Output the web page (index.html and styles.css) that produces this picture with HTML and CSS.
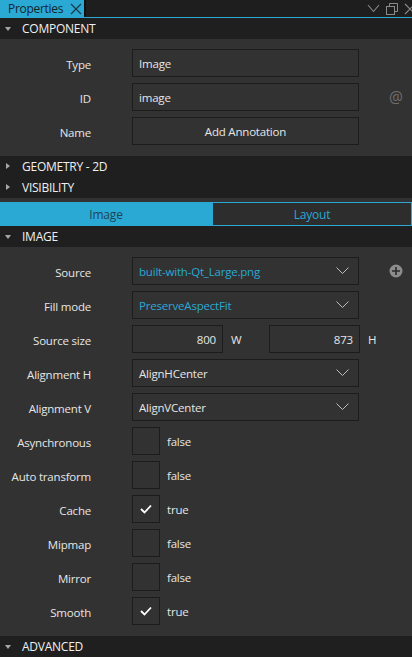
FILE: index.html
```html
<!DOCTYPE html>
<html>
<head>
<meta charset="utf-8">
<link rel="stylesheet" href="styles.css">
</head>
<body>
<div class="panel">
  <div class="tabbar">
    <div class="tab">
      <span class="tab-title">Properties</span>
      <svg class="tab-close" width="12" height="12" viewBox="0 0 12 12"><path d="M1 1 L11 11 M11 1 L1 11" stroke="#1d3946" stroke-width="1.2" fill="none"/></svg>
    </div>
    <div class="tab-tools">
      <svg width="13" height="9" viewBox="0 0 13 9"><path d="M1 1 L6.5 7.5 L12 1" stroke="#8a8a8a" stroke-width="1.1" fill="none"/></svg>
      <svg width="12" height="12" viewBox="0 0 12 12"><path d="M3.5 3.5 V0.5 H11.5 V8.5 H8.5" stroke="#8a8a8a" fill="none"/><rect x="0.5" y="3.5" width="8" height="8" stroke="#8a8a8a" fill="none"/></svg>
      <svg width="8" height="12" viewBox="0 0 8 12"><path d="M1 1 L11 11 M11 1 L1 11" stroke="#8a8a8a" stroke-width="1.1" fill="none"/></svg>
    </div>
  </div>

  <div class="section-head"><span class="tri-down"></span>COMPONENT</div>
  <div class="section-body">
    <div class="row"><div class="label">Type</div><div class="field input">Image</div></div>
    <div class="row"><div class="label">ID</div><div class="field input">image</div><div class="side at">@</div></div>
    <div class="row"><div class="label">Name</div><div class="field button">Add Annotation</div></div>
  </div>

  <div class="section-head"><span class="tri-right"></span>GEOMETRY - 2D</div>
  <div class="section-head"><span class="tri-right"></span>VISIBILITY</div>
  <div class="spacer"></div>

  <div class="tabs">
    <div class="subtab active">Image</div>
    <div class="subtab">Layout</div>
  </div>

  <div class="section-head"><span class="tri-down"></span>IMAGE</div>
  <div class="section-body">
    <div class="row"><div class="label">Source</div>
      <div class="field combo blue"><span>built-with-Qt_Large.png</span><svg class="chev" width="13" height="8" viewBox="0 0 13 8"><path d="M0.5 0.5 L6.5 6.5 L12.5 0.5" stroke="#bdbdbd" stroke-width="1" fill="none"/></svg></div>
      <div class="side"><svg width="14" height="14" viewBox="0 0 14 14"><circle cx="7" cy="7" r="6.5" fill="#8c8c8c"/><path d="M7 3 V11 M3 7 H11" stroke="#2a2a2a" stroke-width="1.6"/></svg></div>
    </div>
    <div class="row"><div class="label">Fill mode</div>
      <div class="field combo blue"><span>PreserveAspectFit</span><svg class="chev" width="13" height="8" viewBox="0 0 13 8"><path d="M0.5 0.5 L6.5 6.5 L12.5 0.5" stroke="#bdbdbd" stroke-width="1" fill="none"/></svg></div>
    </div>
    <div class="row"><div class="label">Source size</div>
      <div class="pair">
        <div class="num">800</div><span class="unit">W</span>
        <div class="num">873</div><span class="unit">H</span>
      </div>
    </div>
    <div class="row"><div class="label">Alignment H</div>
      <div class="field combo"><span>AlignHCenter</span><svg class="chev" width="13" height="8" viewBox="0 0 13 8"><path d="M0.5 0.5 L6.5 6.5 L12.5 0.5" stroke="#bdbdbd" stroke-width="1" fill="none"/></svg></div>
    </div>
    <div class="row"><div class="label">Alignment V</div>
      <div class="field combo"><span>AlignVCenter</span><svg class="chev" width="13" height="8" viewBox="0 0 13 8"><path d="M0.5 0.5 L6.5 6.5 L12.5 0.5" stroke="#bdbdbd" stroke-width="1" fill="none"/></svg></div>
    </div>
    <div class="row"><div class="label">Asynchronous</div><div class="check"></div><span class="cval">false</span></div>
    <div class="row"><div class="label">Auto transform</div><div class="check"></div><span class="cval">false</span></div>
    <div class="row"><div class="label">Cache</div><div class="check"><svg width="12" height="10" viewBox="0 0 12 10"><path d="M1 5 L4.5 8.5 L11 1.5" stroke="#ffffff" stroke-width="1.8" fill="none"/></svg></div><span class="cval">true</span></div>
    <div class="row"><div class="label">Mipmap</div><div class="check"></div><span class="cval">false</span></div>
    <div class="row"><div class="label">Mirror</div><div class="check"></div><span class="cval">false</span></div>
    <div class="row"><div class="label">Smooth</div><div class="check"><svg width="12" height="10" viewBox="0 0 12 10"><path d="M1 5 L4.5 8.5 L11 1.5" stroke="#ffffff" stroke-width="1.8" fill="none"/></svg></div><span class="cval">true</span></div>
  </div>

  <div class="section-head"><span class="tri-down"></span>ADVANCED</div>
</div>
</body>
</html>
```

FILE: styles.css
```css
html, body {
  margin: 0;
  padding: 0;
  background: #323232;
}
body {
  font-family: "Open Sans", "Noto Sans", sans-serif;
  font-size: 11.5px;
  letter-spacing: -0.2px;
  color: #e6e6e6;
  width: 412px;
  height: 657px;
  overflow: hidden;
}
.panel {
  display: flex;
  flex-direction: column;
}
.tabbar {
  height: 17px;
  background: #1e1e1e;
  border-bottom: 1px solid #2aa9d4;
  display: flex;
  justify-content: space-between;
  align-items: stretch;
}
.tab {
  width: 86px;
  background: #2aa9d4;
  display: flex;
  align-items: center;
  padding-left: 8px;
  box-sizing: border-box;
  border-right: 2px solid #111;
}
.tab-title {
  color: #14262e;
  font-size: 12px;
  line-height: 17px;
  letter-spacing: -0.3px;
}
.tab-close {
  margin-left: 7px;
  flex: none;
}
.tab-tools {
  display: flex;
  align-items: center;
  gap: 6px;
}
.section-head {
  height: 21px;
  background: #1f1f1f;
  display: flex;
  align-items: center;
  padding-left: 22px;
  position: relative;
  font-size: 12px;
  letter-spacing: -0.25px;
  color: #f0f0f0;
}
.tri-down {
  position: absolute;
  left: 5px;
  top: 9px;
  width: 0;
  height: 0;
  border-left: 3.5px solid transparent;
  border-right: 3.5px solid transparent;
  border-top: 4px solid #a8a8a8;
}
.tri-right {
  position: absolute;
  left: 6px;
  top: 7px;
  width: 0;
  height: 0;
  border-top: 3.5px solid transparent;
  border-bottom: 3.5px solid transparent;
  border-left: 4px solid #a8a8a8;
}
.section-body {
  background: #323232;
  padding: 10px 0 11px 0;
  display: flex;
  flex-direction: column;
  gap: 6px;
}
.row {
  display: flex;
  align-items: center;
  height: 28px;
}
.label {
  width: 91px;
  margin-right: 41px;
  text-align: right;
  flex: none;
  padding-top: 2px;
}
.field {
  width: 227px;
  height: 28px;
  box-sizing: border-box;
  border: 1px solid #1c1c1c;
  display: flex;
  align-items: center;
  flex: none;
}
.input {
  padding-left: 6px;
}
.button {
  justify-content: center;
}
.combo {
  padding-left: 6px;
  padding-right: 9px;
  justify-content: space-between;
}
.blue {
  color: #2aa9d4;
}
.side {
  padding-left: 30px;
  display: flex;
  align-items: center;
}
.at {
  color: #6e6e6e;
  font-size: 15.5px;
  padding-left: 30px;
}
.pair {
  display: flex;
  align-items: center;
}
.num {
  width: 91px;
  height: 28px;
  box-sizing: border-box;
  border: 1px solid #1c1c1c;
  display: flex;
  align-items: center;
  justify-content: flex-end;
  padding-right: 6px;
}
.unit {
  width: 46px;
  padding-left: 8px;
  box-sizing: border-box;
}
.check {
  width: 28px;
  height: 28px;
  box-sizing: border-box;
  border: 1px solid #1c1c1c;
  display: flex;
  align-items: center;
  justify-content: center;
  flex: none;
}
.cval {
  margin-left: 7px;
}
.spacer {
  height: 4px;
  background: #323232;
}
.tabs {
  display: flex;
  height: 24px;
}
.subtab {
  display: flex;
  align-items: center;
  justify-content: center;
  box-sizing: border-box;
  border: 1px solid #2aa9d4;
  background: #2d2d2d;
  color: #2aa9d4;
  font-size: 12px;
}
.subtab.active {
  width: 212px;
  flex: none;
  background: #2aa9d4;
  color: #1f4554;
}
.subtab:not(.active) {
  flex: 1;
}
```
